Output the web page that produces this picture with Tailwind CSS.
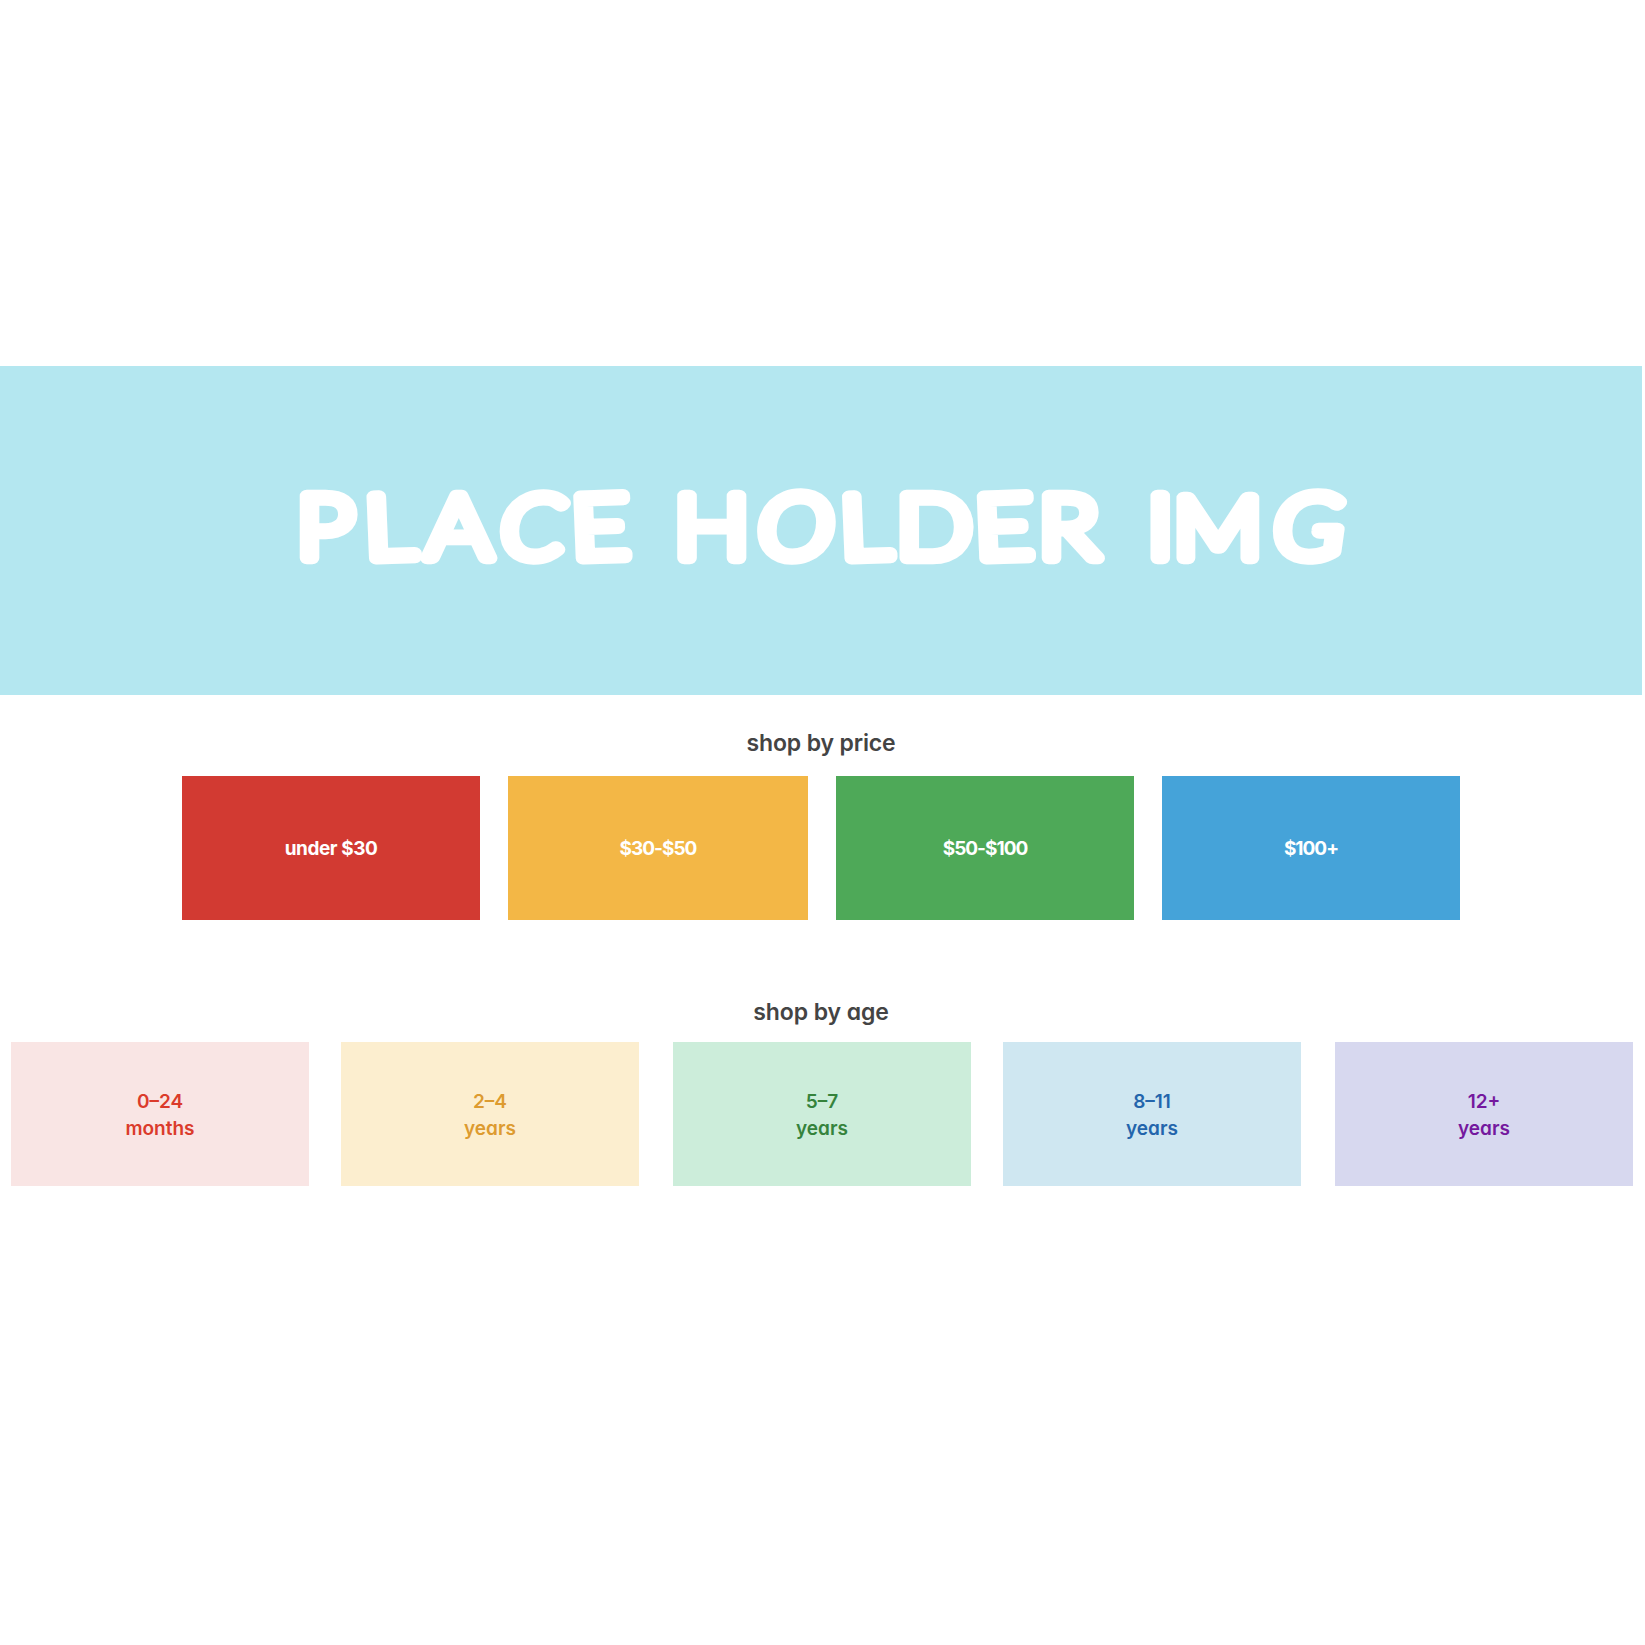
<!DOCTYPE html>
<html lang="en">
<head>
<meta charset="utf-8">
<title>Shop</title>
<script src="https://cdn.jsdelivr.net/npm/@tailwindcss/browser@4"></script>
</head>
<body class="bg-white font-['Inter',sans-serif] [font-feature-settings:'cv11'] overflow-hidden">
<main class="w-[1642px] pt-[366px]">
  <section class="h-[329px] bg-[#b4e7f0]">
    <svg class="block w-full h-full" viewBox="0 366 1642 329" role="img" aria-label="Place holder">
      <g transform="scale(1.15 1)" fill="#fff" stroke="#fff" stroke-width="12.500" stroke-linejoin="round" font-family="Lato" font-weight="300" font-size="87" text-anchor="middle">
        <text y="558.500" x="283 340 399 463 523" rotate="0 -2 0 0 -2">PLA<tspan font-style="italic">C</tspan>E</text>
        <text y="558.500" x="619 692 753.500 812.500 874 929.500" rotate="0 0 -2 0 -2 0">H<tspan font-style="italic" font-size="88.500">O</tspan>LDER</text>
        <text y="558.500" x="1009 1059 1138">I<tspan font-size="85">M</tspan><tspan font-style="italic" font-size="88.500">G</tspan></text>
      </g>
    </svg>
  </section>

  <section class="pt-[32px]">
    <h2 class="text-center text-[23px] leading-[32px] font-semibold text-[#444] tracking-[-0.15px]">shop by price</h2>
    <div class="mt-[17px] ml-[182px] flex gap-7 text-[19px] font-bold text-white tracking-[-1px]">
      <a class="flex h-36 w-[298px] items-center justify-center bg-[#d23a32] pt-0.5 tracking-[-0.45px]">under $30</a>
      <a class="flex h-36 w-[300px] items-center justify-center bg-[#f3b746] pt-0.5">$30-$50</a>
      <a class="flex h-36 w-[298px] items-center justify-center bg-[#4ea958] pt-0.5">$50-$100</a>
      <a class="flex h-36 w-[298px] items-center justify-center bg-[#45a3d9] pt-0.5">$100+</a>
    </div>
  </section>

  <section class="pt-[76px]">
    <h2 class="text-center text-[23px] leading-[32px] font-semibold text-[#444] tracking-[-0.1px]">shop by age</h2>
    <div class="mt-[14px] ml-[11px] flex gap-8 text-center text-[19px] leading-[27px] font-semibold">
      <a class="flex h-36 w-[298px] items-center justify-center bg-[#f9e5e4] pt-0.5 text-[#db3b2b]">0–24<br>months</a>
      <a class="mr-0.5 flex h-36 w-[298px] items-center justify-center bg-[#fceecf] pt-0.5 text-[#dd9b30]">2–4<br>years</a>
      <a class="flex h-36 w-[298px] items-center justify-center bg-[#ccedda] pt-0.5 text-[#35833c]">5–7<br>years</a>
      <a class="mr-0.5 flex h-36 w-[298px] items-center justify-center bg-[#cfe7f1] pt-0.5 text-[#2365ac]">8–11<br>years</a>
      <a class="flex h-36 w-[298px] items-center justify-center bg-[#d7d8ef] pt-0.5 text-[#74189e]">12+<br>years</a>
    </div>
  </section>
</main>
</body>
</html>
